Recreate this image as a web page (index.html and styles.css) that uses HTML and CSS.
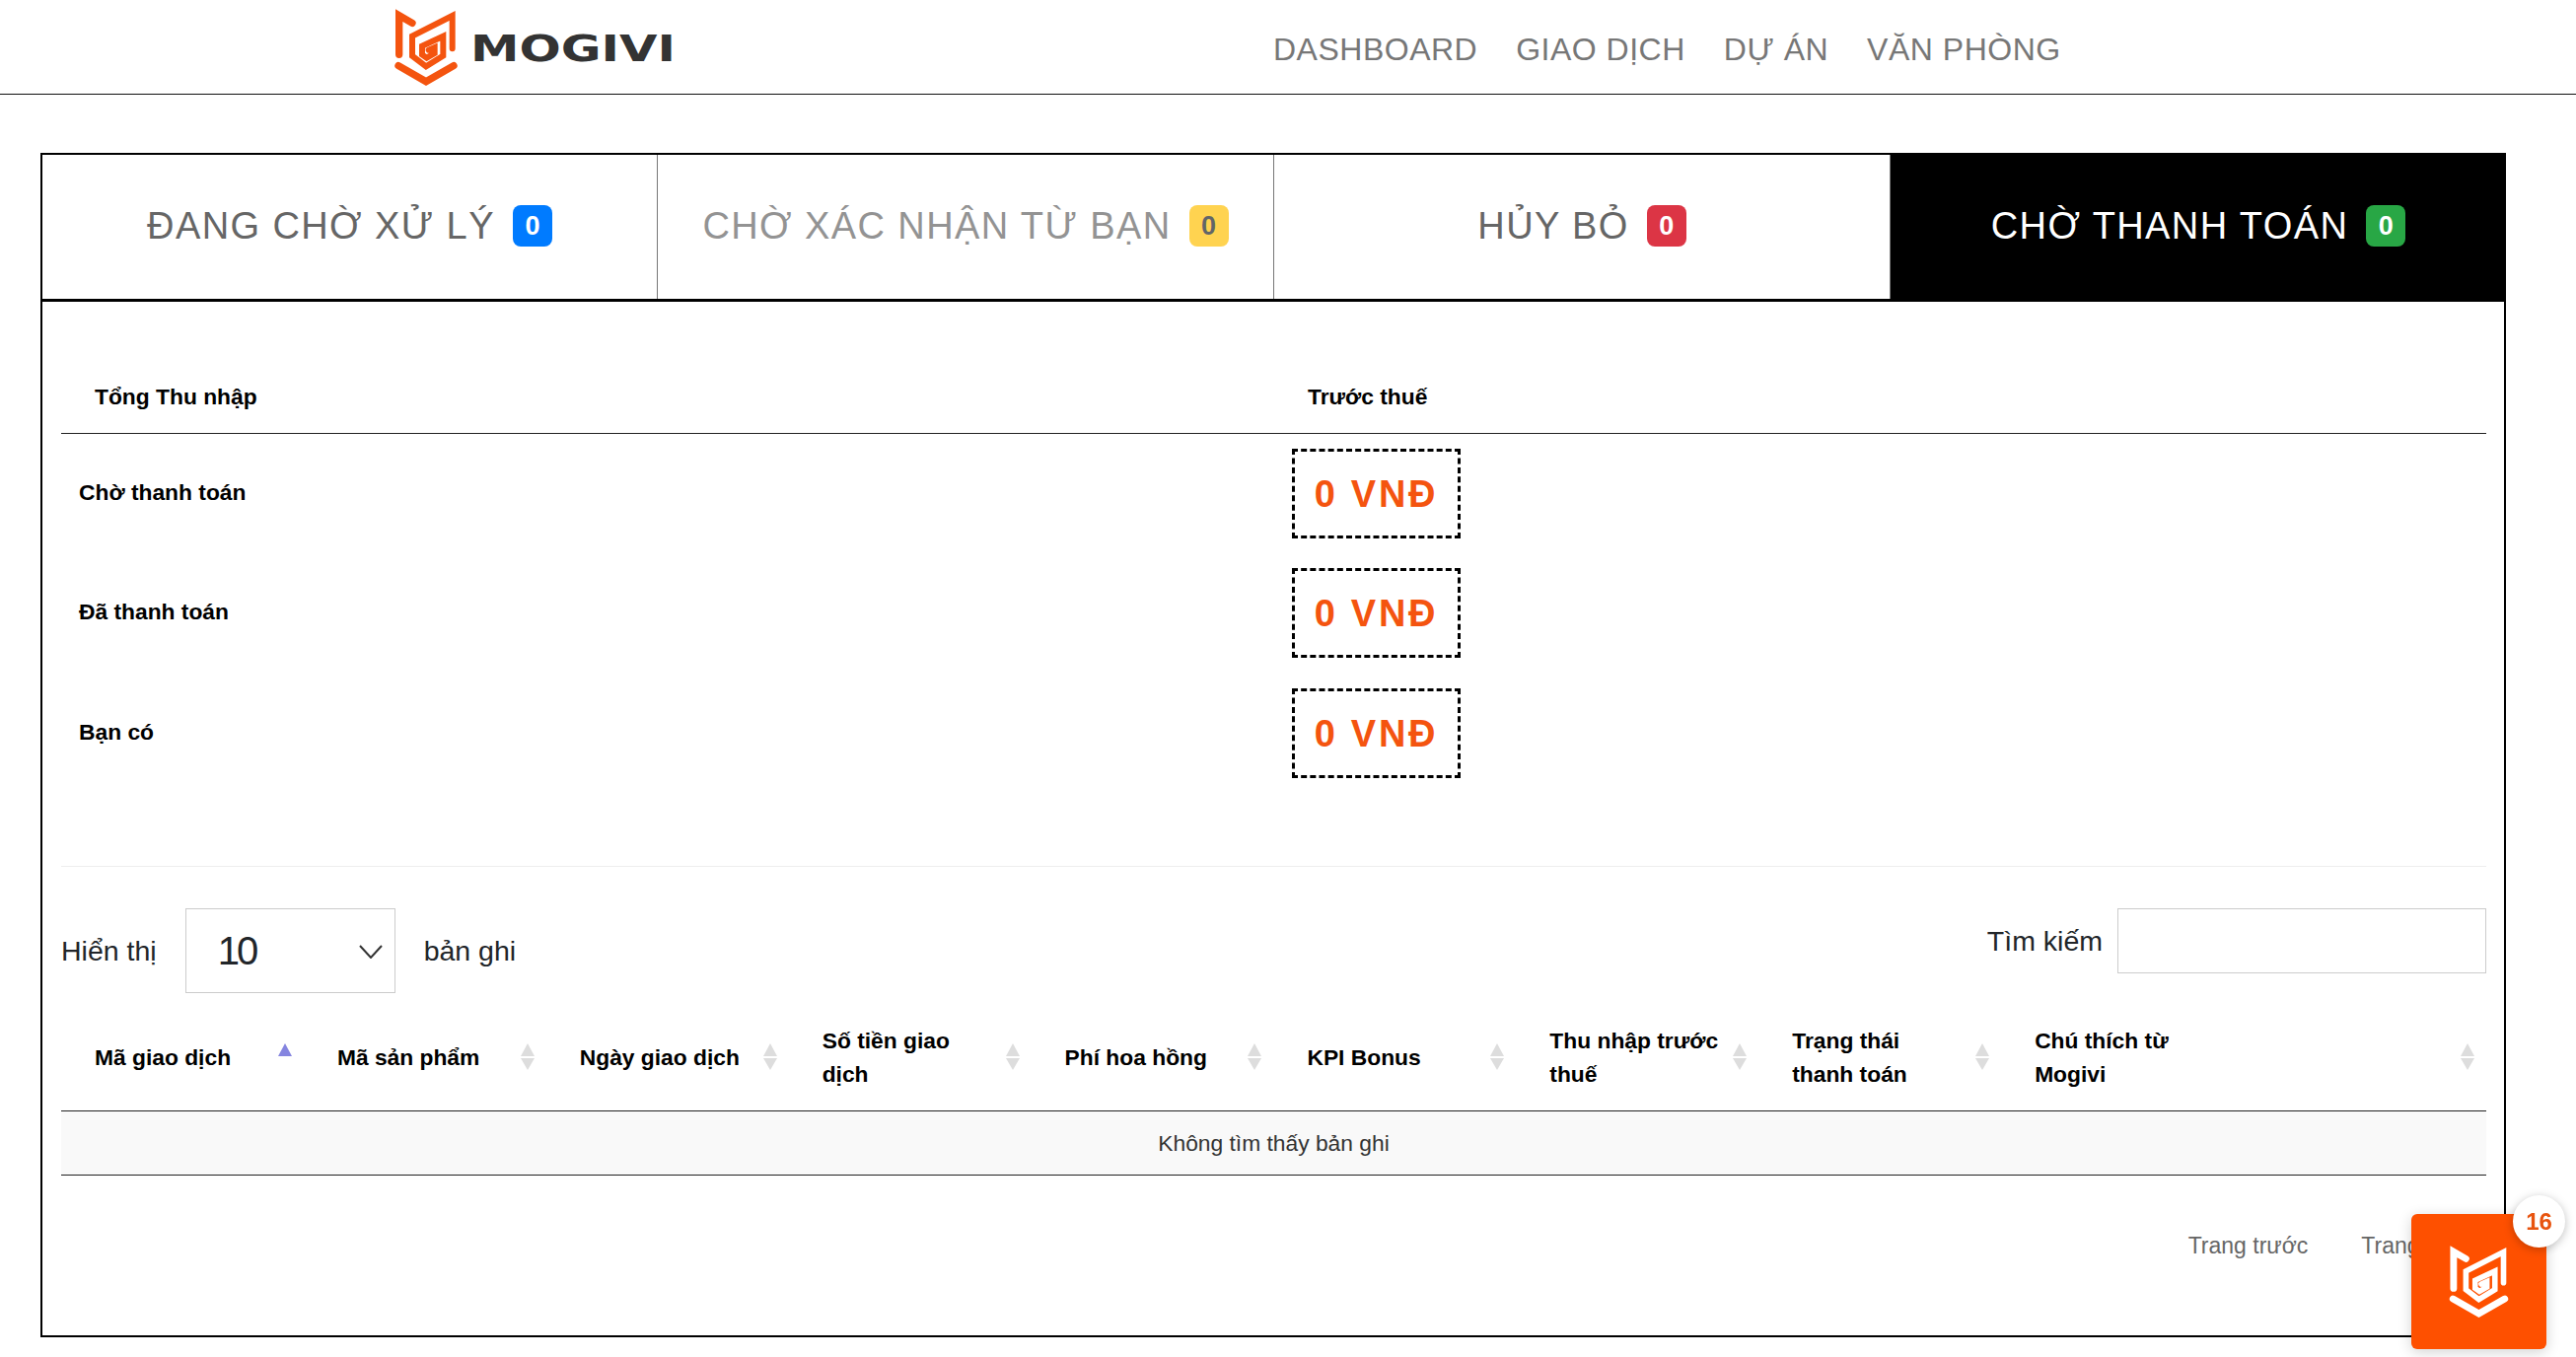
FILE: index.html
```html
<!DOCTYPE html>
<html lang="vi">
<head>
    <meta charset="UTF-8">
    <title>Mogivi</title>
    <link rel="stylesheet" href="styles.css">
</head>
<body>
    <svg class="defs" width="0" height="0">
        <symbol id="mogivi-mark" viewBox="0 0 240 252">
            <g fill="none" stroke="currentColor" stroke-linecap="round" stroke-linejoin="miter">
                <path stroke-width="22" d="M78 52 L38 29 V148"/>
                <path stroke-width="18" d="M200 130 V30 L78 92 V152 L120 184 L172 152 V92 L108 122 V148 L122 158 L146 144 V126 L128 134"/>
                <path stroke-width="22" d="M36 182 L120 230 L204 182"/>
            </g>
        </symbol>
    </svg>

    <header class="topbar">
        <a class="logo" href="#">
            <svg class="logo-mark"><use href="#mogivi-mark"/></svg>
            <svg class="logo-word" viewBox="0 0 202 28">
                <text x="-3" y="27" textLength="208" lengthAdjust="spacingAndGlyphs">MOGIVI</text>
            </svg>
        </a>
        <nav class="menu">
            <a href="#">DASHBOARD</a>
            <a href="#">GIAO DỊCH</a>
            <a href="#">DỰ ÁN</a>
            <a href="#">VĂN PHÒNG</a>
        </nav>
    </header>

    <main class="page">
        <div class="tabs">
            <a class="tab" href="#"><span class="tab-inner">ĐANG CHỜ XỬ LÝ <span class="badge badge-blue">0</span></span></a>
            <a class="tab tab-muted" href="#"><span class="tab-inner">CHỜ XÁC NHẬN TỪ BẠN <span class="badge badge-yellow">0</span></span></a>
            <a class="tab" href="#"><span class="tab-inner">HỦY BỎ <span class="badge badge-red">0</span></span></a>
            <a class="tab tab-active" href="#"><span class="tab-inner">CHỜ THANH TOÁN <span class="badge badge-green">0</span></span></a>
        </div>

        <section class="panel">
            <table class="summary">
                <thead>
                    <tr>
                        <th class="summary-label">Tổng Thu nhập</th>
                        <th>Trước thuế</th>
                    </tr>
                </thead>
                <tbody>
                    <tr>
                        <td>Chờ thanh toán</td>
                        <td><span class="amount">0 VNĐ</span></td>
                    </tr>
                    <tr>
                        <td>Đã thanh toán</td>
                        <td><span class="amount">0 VNĐ</span></td>
                    </tr>
                    <tr>
                        <td>Bạn có</td>
                        <td><span class="amount">0 VNĐ</span></td>
                    </tr>
                </tbody>
            </table>

            <hr class="divider">

            <div class="controls">
                <div class="length">
                    <label for="pageSize">Hiển thị</label>
                    <div class="select-wrap">
                        <select id="pageSize">
                            <option>10</option>
                            <option>25</option>
                            <option>50</option>
                        </select>
                        <svg class="chevron" viewBox="0 0 24 14"><path d="M1 1 L12 13 L23 1"/></svg>
                    </div>
                    <span>bản ghi</span>
                </div>
                <div class="search">
                    <label for="searchBox">Tìm kiếm</label>
                    <input id="searchBox" type="text">
                </div>
            </div>

            <table class="records">
                <thead>
                    <tr>
                        <th>Mã giao dịch<span class="sort sort-asc"></span></th>
                        <th>Mã sản phẩm<span class="sort"></span></th>
                        <th>Ngày giao dịch<span class="sort"></span></th>
                        <th>Số tiền giao<br>dịch<span class="sort"></span></th>
                        <th>Phí hoa hồng<span class="sort"></span></th>
                        <th>KPI Bonus<span class="sort"></span></th>
                        <th>Thu nhập trước<br>thuế<span class="sort"></span></th>
                        <th>Trạng thái<br>thanh toán<span class="sort"></span></th>
                        <th class="records-wide">Chú thích từ<br>Mogivi<span class="sort"></span></th>
                    </tr>
                </thead>
                <tbody>
                    <tr>
                        <td colspan="9">Không tìm thấy bản ghi</td>
                    </tr>
                </tbody>
            </table>

            <div class="pager">
                <a href="#">Trang trước</a>
                <a href="#">Trang sau</a>
            </div>
        </section>
    </main>

    <a class="chat-widget" href="#">
        <svg class="chat-mark"><use href="#mogivi-mark"/></svg>
        <span class="chat-count">16</span>
    </a>
</body>
</html>
```

FILE: styles.css
```css
:root {
    --orange: #fe5000;
    --line: #222;
    --field-border: #ccc;
}

* {
    box-sizing: border-box;
}

body {
    margin: 0;
    background: #fff;
    color: #000;
    font-family: "Liberation Sans", Arial, sans-serif;
    font-size: 22.8px;
    line-height: 34px;
}

a {
    text-decoration: none;
    color: inherit;
}

.defs {
    position: absolute;
}

/* top bar */
.topbar {
    display: flex;
    align-items: center;
    height: 96px;
    padding-left: 392px;
    border-bottom: 1px solid #111;
}

.logo {
    display: flex;
    align-items: center;
    gap: 8px;
    width: 290px;
    height: 95px;
}

.logo-mark {
    width: 80px;
    height: 84px;
    color: #f4540f;
    flex: none;
}

.logo-word {
    width: 202px;
    height: 28px;
    margin-top: 2px;
    overflow: visible;
}

.logo-word text {
    font-family: "DejaVu Sans", sans-serif;
    font-weight: bold;
    font-size: 37px;
    fill: #333;
}

.menu {
    display: flex;
    gap: 39px;
    margin-left: 609px;
    padding-top: 4px;
    color: #777;
    font-size: 32px;
    letter-spacing: 0.5px;
}

/* tabs */
.page {
    padding: 59px 71px 0 41px;
}

.tabs {
    display: flex;
    height: 151px;
    border-top: 2px solid #000;
    border-bottom: 3px solid #000;
}

.tab {
    flex: none;
    width: 25%;
    display: flex;
    align-items: center;
    justify-content: center;
    padding-bottom: 2px;
    color: #666;
    font-size: 38px;
    letter-spacing: 1.4px;
    border-right: 1px solid #777;
}

.tab:first-child {
    width: calc(25% + 1px);
    border-left: 2px solid #000;
}

.tab-inner {
    display: flex;
    align-items: center;
    gap: 18px;
}

.tab-muted .tab-inner {
    opacity: 0.7;
}

.tab-active {
    flex: 1;
    width: auto;
    min-width: 0;
    margin: -2px 0 -3px;
    padding-bottom: 3px;
    background: #000;
    color: #fff;
    border-right: 0;
}

.badge {
    display: flex;
    align-items: center;
    justify-content: center;
    width: 40px;
    height: 42px;
    border-radius: 8px;
    color: #fff;
    font-size: 27px;
    font-weight: bold;
    letter-spacing: 0;
}

.badge-blue { background: #007bff; }
.badge-yellow { background: #ffc107; color: #212529; }
.badge-red { background: #dc3545; }
.badge-green { background: #28a745; }

/* panel */
.panel {
    height: 1050px;
    padding: 79px 18px 0 19px;
    border: 2px solid #000;
    border-top: 0;
}

.summary {
    width: 100%;
    border-collapse: collapse;
    table-layout: fixed;
}

.summary th {
    padding: 0 34px 20px;
    text-align: left;
    font-weight: bold;
    border-bottom: 1px solid var(--line);
}

.summary-label {
    width: 1230px;
}

.summary td {
    padding: 15px 18px;
    font-weight: bold;
    vertical-align: middle;
}

.summary td:first-child {
    padding-bottom: 18px;
}

.summary tr:last-child td {
    padding-top: 16px;
}

.amount {
    display: block;
    width: 171px;
    height: 91px;
    border: 3px dashed #000;
    color: #f4540f;
    font-size: 38px;
    font-weight: bold;
    letter-spacing: 2.7px;
    line-height: 87px;
    text-align: center;
}

.divider {
    margin: 74px 0 42px;
    border: 0;
    border-top: 1px solid #eee;
}

/* table controls */
.controls {
    display: flex;
    justify-content: space-between;
    align-items: flex-start;
    font-size: 28.5px;
    color: #212529;
}

.length {
    display: flex;
    align-items: center;
    gap: 29px;
}

.select-wrap {
    position: relative;
}

.select-wrap select {
    display: block;
    width: 213px;
    height: 86px;
    padding-left: 32px;
    border: 1px solid var(--field-border);
    border-radius: 0;
    background: #fff;
    color: #212529;
    font-family: inherit;
    font-size: 40px;
    letter-spacing: -3px;
    appearance: none;
}

.chevron {
    position: absolute;
    top: 37px;
    right: 13px;
    width: 24px;
    height: 14px;
    fill: none;
    stroke: #333;
    stroke-width: 2;
}

.search {
    display: flex;
    align-items: center;
    gap: 15px;
}

.search input {
    width: 374px;
    height: 66px;
    border: 1px solid var(--field-border);
    background: #fff;
}

/* records table */
.records {
    width: 100%;
    margin-top: 11px;
    border-collapse: collapse;
    table-layout: fixed;
}

.records th {
    position: relative;
    width: 10%;
    padding: 20px 34px;
    text-align: left;
    white-space: nowrap;
    font-weight: bold;
    border-bottom: 1px solid var(--line);
}

.records .records-wide {
    width: 20%;
}

.records td {
    padding: 15px;
    background: #f9f9f9;
    color: #333;
    text-align: center;
    border-bottom: 1px solid var(--line);
}

.sort {
    position: absolute;
    top: 40px;
    right: 12px;
    width: 14px;
    height: 27px;
}

.sort::before,
.sort::after {
    content: "";
    position: absolute;
    left: 0;
    border-left: 7px solid transparent;
    border-right: 7px solid transparent;
}

.sort::before {
    top: 0;
    border-bottom: 13px solid #ddd;
}

.sort::after {
    bottom: 0;
    border-top: 12px solid #ddd;
}

.sort-asc::before {
    border-bottom-color: #8585e0;
}

.sort-asc::after {
    display: none;
}

.pager {
    display: flex;
    justify-content: flex-end;
    gap: 54px;
    padding: 54px 24px 0 0;
    color: #666;
    font-size: 23px;
}

/* floating chat button */
.chat-widget {
    position: fixed;
    right: 30px;
    bottom: 8px;
    display: flex;
    align-items: center;
    justify-content: center;
    width: 137px;
    height: 137px;
    border-radius: 6px;
    background: var(--orange);
    box-shadow: 0 3px 14px rgba(0, 0, 0, 0.18);
}

.chat-mark {
    width: 75px;
    height: 79px;
    color: #fff;
}

.chat-count {
    position: absolute;
    top: -19px;
    right: -19px;
    display: flex;
    align-items: center;
    justify-content: center;
    width: 53px;
    height: 53px;
    border-radius: 50%;
    background: #fff;
    color: #e8540f;
    font-size: 24px;
    font-weight: bold;
    box-shadow: 0 2px 10px rgba(0, 0, 0, 0.25);
}
```
